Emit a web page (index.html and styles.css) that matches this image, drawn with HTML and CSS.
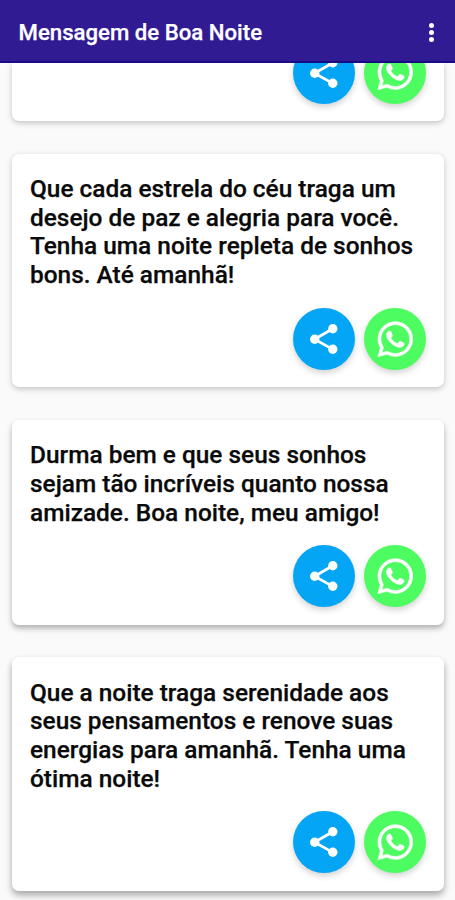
FILE: index.html
```html
<!DOCTYPE html>
<html lang="pt-BR">
<head>
<meta charset="utf-8">
<meta name="viewport" content="width=device-width, initial-scale=1">
<title>Mensagem de Boa Noite</title>
<link rel="stylesheet" href="styles.css">
</head>
<body>
<svg class="symbols" aria-hidden="true">
  <symbol id="share" viewBox="0 0 62 62">
    <path d="M39.8 20.8 21.5 31.2 39.8 41.4" fill="none" stroke="#fff" stroke-width="2.8"/>
    <circle cx="39.8" cy="20.8" r="4.7" fill="#fff"/>
    <circle cx="21.7" cy="31.2" r="4.7" fill="#fff"/>
    <circle cx="39.8" cy="41.3" r="4.7" fill="#fff"/>
  </symbol>
  <symbol id="whatsapp" viewBox="-0.5 -0.5 25 25">
    <path fill="#fff" stroke="#fff" stroke-width=".4" d="M17.472 14.382c-.297-.149-1.758-.867-2.03-.967-.273-.099-.471-.148-.67.15-.197.297-.767.966-.94 1.164-.173.199-.347.223-.644.075-.297-.15-1.255-.463-2.39-1.475-.883-.788-1.48-1.761-1.653-2.059-.173-.297-.018-.458.13-.606.134-.133.298-.347.446-.52.149-.174.198-.298.298-.497.099-.198.05-.371-.025-.52-.075-.149-.669-1.612-.916-2.207-.242-.579-.487-.5-.669-.51-.173-.008-.371-.01-.57-.01-.198 0-.52.074-.792.372-.272.297-1.04 1.016-1.04 2.479 0 1.462 1.065 2.875 1.213 3.074.149.198 2.096 3.2 5.077 4.487.709.306 1.262.489 1.694.625.712.227 1.36.195 1.871.118.571-.085 1.758-.719 2.006-1.413.248-.694.248-1.289.173-1.413-.074-.124-.272-.198-.57-.347m-5.421 7.403h-.004a9.87 9.87 0 0 1-5.031-1.378l-.361-.214-3.741.982.998-3.648-.235-.374a9.86 9.86 0 0 1-1.51-5.26c.001-5.45 4.436-9.884 9.888-9.884 2.64 0 5.122 1.03 6.988 2.898a9.825 9.825 0 0 1 2.893 6.994c-.003 5.45-4.437 9.884-9.885 9.884m8.413-18.297A11.815 11.815 0 0 0 12.05 0C5.495 0 .16 5.335.157 11.892c0 2.096.547 4.142 1.588 5.945L.057 24l6.305-1.654a11.882 11.882 0 0 0 5.683 1.448h.005c6.554 0 11.89-5.335 11.893-11.893a11.821 11.821 0 0 0-3.48-8.413Z"/>
  </symbol>
</svg>
<div class="screen">
  <header class="bar">
    <h1 class="title">Mensagem de Boa Noite</h1>
    <button class="more" aria-label="Mais opções"><i></i><i></i><i></i></button>
  </header>
  <main class="list">
    <article class="card card-cut">
      <div class="actions">
        <button class="fab share"><svg class="share-icon"><use href="#share"/></svg></button>
        <button class="fab whats"><svg class="whats-icon"><use href="#whatsapp"/></svg></button>
      </div>
    </article>
    <article class="card">
      <p class="text">Que cada estrela do céu traga um<br>desejo de paz e alegria para você.<br>Tenha uma noite repleta de sonhos<br>bons. Até amanhã!</p>
      <div class="actions">
        <button class="fab share"><svg class="share-icon"><use href="#share"/></svg></button>
        <button class="fab whats"><svg class="whats-icon"><use href="#whatsapp"/></svg></button>
      </div>
    </article>
    <article class="card mid">
      <p class="text">Durma bem e que seus sonhos<br>sejam tão incríveis quanto nossa<br>amizade. Boa noite, meu amigo!</p>
      <div class="actions">
        <button class="fab share"><svg class="share-icon"><use href="#share"/></svg></button>
        <button class="fab whats"><svg class="whats-icon"><use href="#whatsapp"/></svg></button>
      </div>
    </article>
    <article class="card low">
      <p class="text">Que a noite traga serenidade aos<br>seus pensamentos e renove suas<br>energias para amanhã. Tenha uma<br>ótima noite!</p>
      <div class="actions">
        <button class="fab share"><svg class="share-icon"><use href="#share"/></svg></button>
        <button class="fab whats"><svg class="whats-icon"><use href="#whatsapp"/></svg></button>
      </div>
    </article>
  </main>
</div>
</body>
</html>
```
FILE: styles.css
```css
* { box-sizing: border-box; }
body { margin: 0; background: #fafafa; font-family: Roboto, sans-serif; }
button { border: 0; padding: 0; background: none; }
.symbols { display: none; }
.screen { height: 900px; display: flex; flex-direction: column; overflow: hidden; }
.bar {
  flex: none;
  height: 62.5px;
  padding: 5px 19px 0 18.5px;
  display: flex;
  align-items: center;
  justify-content: space-between;
  background: #301b92;
  border-bottom: 2px solid #190b86;
}
.title { margin: 0 0 2px; color: #fff; font-size: 22.2px; font-weight: 500; white-space: nowrap; -webkit-text-stroke: .25px #fff; }
.more { width: 9px; display: flex; flex-direction: column; align-items: center; gap: 2px; }
.more i { width: 5px; height: 5px; border-radius: 50%; background: #fff; }
.list {
  flex: 1;
  min-height: 0;
  overflow: hidden;
  padding: 0 11px 0 12.4px;
  display: flex;
  flex-direction: column;
  gap: 32.3px;
}
.card {
  flex: none;
  height: 233.9px;
  padding: 21.4px 17.6px 17.7px;
  display: flex;
  flex-direction: column;
  justify-content: space-between;
  background: #fff;
  border-radius: 7px;
  box-shadow: 0 2px 5px rgba(0, 0, 0, .16), 0 2px 10px rgba(0, 0, 0, .07);
}
.card-cut { height: 58.8px; padding-top: 0; border-radius: 0 0 7px 7px; justify-content: flex-end; }
.mid { height: 205.2px; box-shadow: 0 3px 5px rgba(0, 0, 0, .24), 0 4px 10px rgba(0, 0, 0, .08); }
.low { box-shadow: 0 4px 6px rgba(0, 0, 0, .28), 0 4px 10px rgba(0, 0, 0, .08); }
.text { margin: 0; font-size: 24.43px; font-weight: 500; line-height: 28.7px; color: #0a0a0a; white-space: nowrap; -webkit-text-stroke: .25px #0a0a0a; }
.actions { display: flex; justify-content: flex-end; gap: 9px; }
.fab {
  flex: none;
  width: 62px;
  height: 62px;
  border-radius: 50%;
  display: flex;
  align-items: center;
  justify-content: center;
  box-shadow: 0 3px 6px rgba(0, 0, 0, .18);
}
.share { background: #03a5f4; }
.whats { background: #4dfc60; }
.share-icon { width: 62px; height: 62px; }
.whats-icon { width: 36.5px; height: 36.5px; }
```
